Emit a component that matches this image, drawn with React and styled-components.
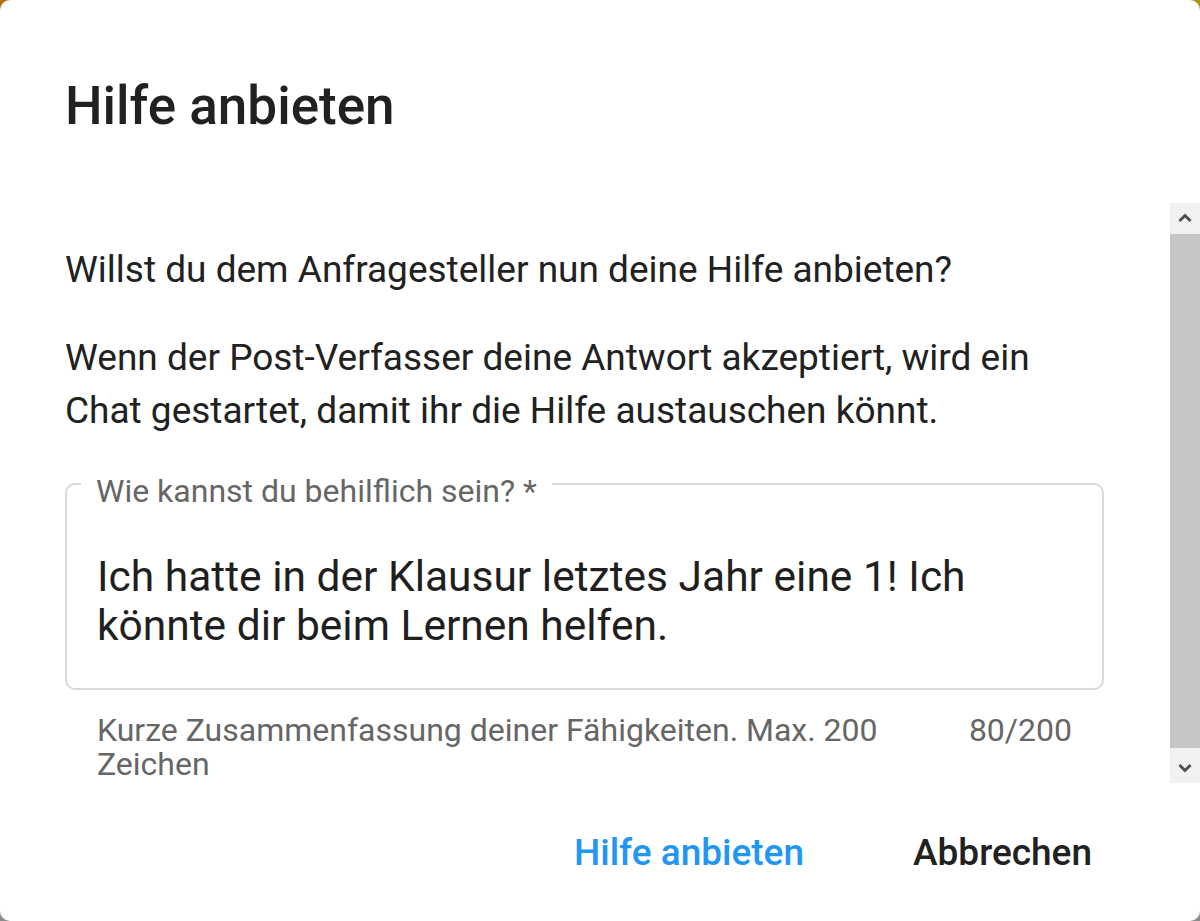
import React from "react";
import styled, { createGlobalStyle } from "styled-components";

const GlobalStyle = createGlobalStyle`
  html, body {
    margin: 0;
    padding: 0;
    height: 100%;
  }
  body {
    font-family: Roboto, "Noto Sans", "Liberation Sans", sans-serif;
    background:
      linear-gradient(to bottom, transparent 50%, #8c8c8c 50%),
      linear-gradient(to right, #b56d0b, #ab9212);
  }
  #root {
    height: 100%;
  }
`;

const Dialog = styled.div`
  height: 921px;
  box-sizing: border-box;
  display: flex;
  flex-direction: column;
  background: #ffffff;
  border-radius: 10px;
  overflow: hidden;
`;

const Title = styled.h2`
  margin: 0;
  padding: 64px 65px 54px;
  font-size: 53px;
  font-weight: 500;
  line-height: 1.6;
  color: #212121;
`;

const Content = styled.div`
  flex: 1;
  min-height: 0;
  display: flex;
`;

const Scroller = styled.div`
  flex: 1;
  min-width: 0;
  overflow-y: auto;
  box-sizing: border-box;
  padding: 40px 66px 0 65px;
`;

const ScrollBar = styled.div`
  flex: none;
  width: 30px;
  display: flex;
  flex-direction: column;
  background: #f1f1f1;
`;

const ScrollButton = styled.div`
  flex: none;
  height: 31px;
  display: flex;
  align-items: center;
  justify-content: center;
  color: #505050;
`;

const Track = styled.div`
  flex: 1;
  display: flex;
  flex-direction: column;
  padding-bottom: 4px;
`;

const Thumb = styled.div`
  flex: 1;
  background: #c6c6c6;
`;

const Paragraph = styled.p`
  margin: 0 0 35px;
  font-size: 37px;
  line-height: 53px;
  color: #212121;

  &:last-of-type {
    margin-bottom: 24px;
  }
`;

const Field = styled.fieldset`
  margin: 0;
  padding: 45px 30px 38px 30px;
  border: 2px solid #d9d9d9;
  border-radius: 10px;
  min-width: 0;
`;

const Legend = styled.legend`
  margin-left: -16px;
  padding: 15px 15px 0;
  font-size: 32px;
  line-height: 31px;
  color: #666666;
`;

const TextArea = styled.textarea`
  display: block;
  width: 100%;
  height: 98px;
  margin: 0;
  padding: 0;
  border: none;
  outline: none;
  resize: none;
  overflow: hidden;
  background: transparent;
  font-family: inherit;
  font-size: 42.5px;
  line-height: 49px;
  color: #1f1f1f;
`;

const HelperRow = styled.div`
  display: flex;
  justify-content: space-between;
  gap: 40px;
  margin-top: 23px;
  padding: 0 32px;
  font-size: 32px;
  line-height: 34px;
  color: #666666;
`;

const HelperText = styled.span`
  flex: 1;
  min-width: 0;
`;

const Counter = styled.span`
  flex: none;
`;

const Actions = styled.div`
  display: flex;
  justify-content: flex-end;
  align-items: center;
  gap: 109px;
  padding: 36px 108px 34px 65px;
`;

const Button = styled.button`
  border: none;
  background: transparent;
  padding: 12px 22px;
  margin: 0 -22px;
  font-family: inherit;
  font-size: 37px;
  font-weight: 500;
  line-height: 44px;
  color: ${(p) => (p.$primary ? "#2196f3" : "#212121")};
  cursor: pointer;
`;

const Chevron = ({ up }) => (
  <svg width="16" height="16" viewBox="0 0 16 16" aria-hidden="true">
    <path
      d={up ? "M2.5 11 L8 5.5 L13.5 11" : "M2.5 5 L8 10.5 L13.5 5"}
      fill="none"
      stroke="currentColor"
      strokeWidth="3"
    />
  </svg>
);

export default function App() {
  const text =
    "Ich hatte in der Klausur letztes Jahr eine 1! Ich könnte dir beim Lernen helfen.";
  return (
    <>
      <GlobalStyle />
      <Dialog>
        <Title>Hilfe anbieten</Title>
        <Content>
          <Scroller>
            <Paragraph>Willst du dem Anfragesteller nun deine Hilfe anbieten?</Paragraph>
            <Paragraph>
              Wenn der Post-Verfasser deine Antwort akzeptiert, wird ein Chat gestartet, damit
              ihr die Hilfe austauschen könnt.
            </Paragraph>
            <Field>
              <Legend>Wie kannst du behilflich sein? *</Legend>
              <TextArea defaultValue={text} rows={2} />
            </Field>
            <HelperRow>
              <HelperText>Kurze Zusammenfassung deiner Fähigkeiten. Max. 200 Zeichen</HelperText>
              <Counter>{text.length}/200</Counter>
            </HelperRow>
          </Scroller>
          <ScrollBar>
            <ScrollButton>
              <Chevron up />
            </ScrollButton>
            <Track>
              <Thumb />
            </Track>
            <ScrollButton>
              <Chevron />
            </ScrollButton>
          </ScrollBar>
        </Content>
        <Actions>
          <Button $primary>Hilfe anbieten</Button>
          <Button>Abbrechen</Button>
        </Actions>
      </Dialog>
    </>
  );
}
